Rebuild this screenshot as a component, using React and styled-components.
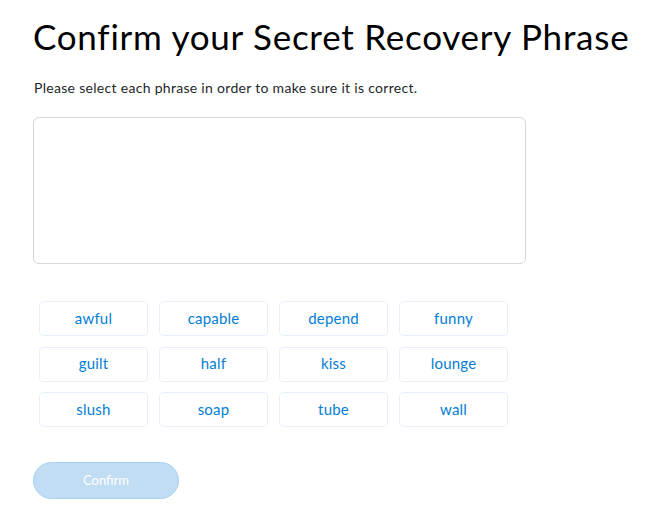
import React from 'react'
import styled, { createGlobalStyle } from 'styled-components'

const words = ['awful', 'capable', 'depend', 'funny', 'guilt', 'half', 'kiss', 'lounge', 'slush', 'soap', 'tube', 'wall']

function App() {
  return (
    <>
      <GlobalStyle />
      <Page>
        <Title>Confirm your Secret Recovery Phrase</Title>
        <Hint>Please select each phrase in order to make sure it is correct.</Hint>
        <PhraseBox />
        <WordGrid>
          {words.map((w) => (
            <WordButton key={w}>{w}</WordButton>
          ))}
        </WordGrid>
        <ConfirmButton disabled>Confirm</ConfirmButton>
      </Page>
    </>
  )
}

export default App

const GlobalStyle = createGlobalStyle`
  body {
    margin: 0;
    background: #fff;
    font-family: Lato, 'Noto Sans', sans-serif;
  }
`

const Page = styled.div`
  width: 648px;
  height: 511px;
  box-sizing: border-box;
  padding: 16px 0 0 33px;
  display: flex;
  flex-direction: column;
  align-items: flex-start;
`

const Title = styled.h1`
  margin: 0;
  font-weight: 400;
  font-size: 35px;
  line-height: 40px;
  color: #000;
  letter-spacing: 0.75px;
  white-space: nowrap;
`

const Hint = styled.p`
  margin: 23px 0 0 1px;
  font-size: 14px;
  line-height: 18px;
  color: #24272a;
  letter-spacing: 0.3px;
`

const PhraseBox = styled.div`
  margin-top: 20px;
  width: 493px;
  height: 147px;
  box-sizing: border-box;
  border: 1.5px solid #d6d6d6;
  border-radius: 6px;
`

const WordGrid = styled.div`
  margin: 37px 0 0 6px;
  display: grid;
  grid-template-columns: repeat(4, 109px);
  grid-auto-rows: 35px;
  gap: 10.5px 11px;
`

const WordButton = styled.button`
  box-sizing: border-box;
  border: 1px solid #e7f0fa;
  border-radius: 4px;
  background: #fff;
  color: #037dd6;
  font-family: Lato, 'Noto Sans', sans-serif;
  font-size: 15px;
  letter-spacing: 0.2px;
  padding: 0 0 2px;
  cursor: pointer;
`

const ConfirmButton = styled.button`
  margin-top: 35px;
  width: 146px;
  height: 37px;
  box-sizing: border-box;
  border: 1px solid #a9d2f2;
  border-radius: 19px;
  background: #c1ddf4;
  color: #fff;
  font-family: Lato, 'Noto Sans', sans-serif;
  font-size: 13px;
  padding: 0 0 2px;
`
